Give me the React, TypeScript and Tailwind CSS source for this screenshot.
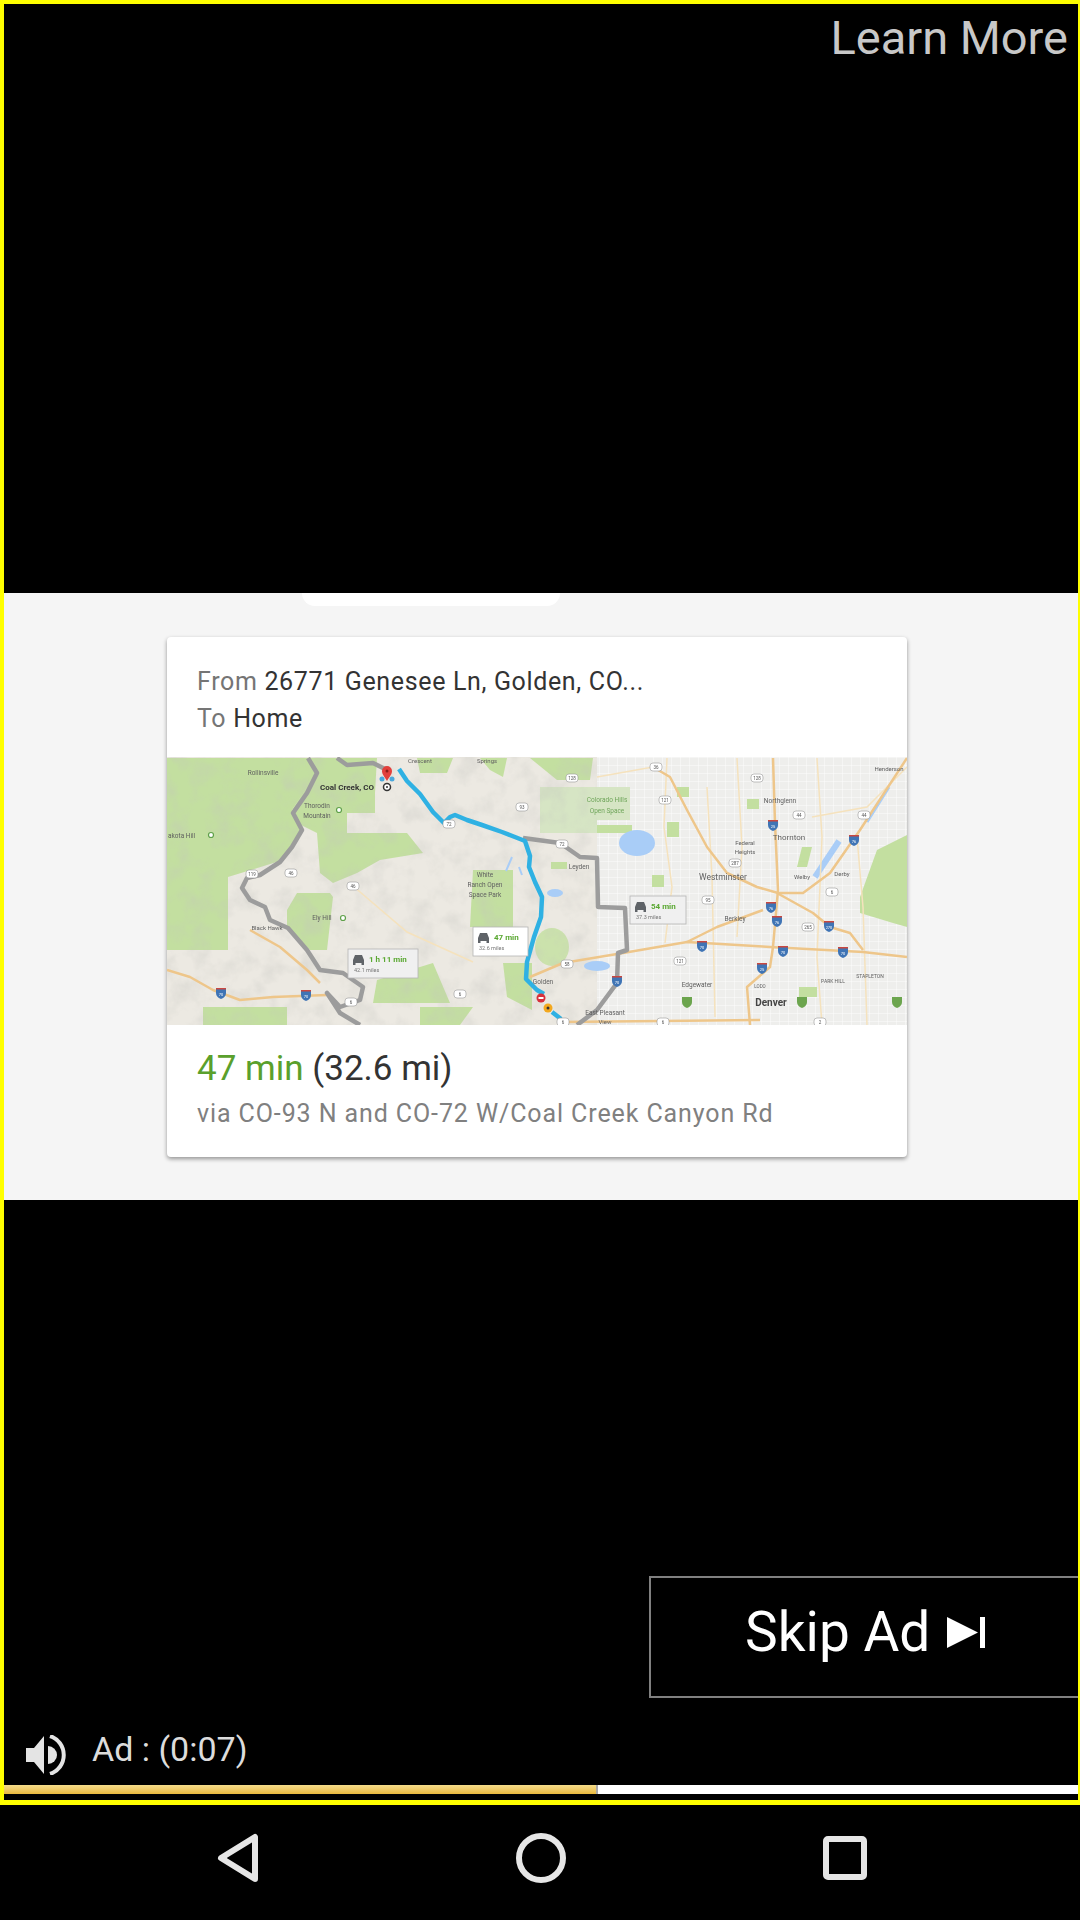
const greens = [
  "0,1 145,1 150,16 125,53 135,73 116,103 61,120 61,193 0,193",
  "145,1 210,1 208,36 208,56 180,56 180,76 150,76 130,66 125,53 140,30",
  "150,76 240,76 256,96 213,103 190,116 166,126 153,116",
  "120,153 130,136 163,136 166,140 160,193 143,193 120,170",
  "210,223 266,206 283,246 206,246",
  "36,250 120,250 120,268 36,268",
  "253,250 306,250 293,268 253,268",
  "306,113 346,113 346,170 303,170",
  "336,206 365,206 365,253 340,240",
  "250,1 286,1 280,16 253,16",
  "313,1 340,1 336,20 323,13",
  "363,1 426,1 423,23 390,23",
  "430,68 465,68 465,76 430,76",
  "740,78 710,93 693,140 693,156 726,166 740,170",
  "510,30 522,30 522,40 510,40",
  "580,42 592,42 592,52 580,52",
  "500,65 512,65 512,80 500,80",
  "485,118 497,118 497,130 485,130",
  "635,90 645,90 640,110 630,110",
  "632,230 650,230 650,240 632,240",
  "384,105 400,105 400,112 384,112",
];

const roads = [
  "606,1 608,66 611,133 606,190 603,210 580,230 583,268",
  "486,10 503,20 520,53 540,90 560,116 590,130 611,136 636,136 663,116 693,73 740,1",
  "610,136 646,156 663,170 683,176 696,193",
  "363,220 396,206 456,196 520,185 603,190 696,195 740,200",
  "520,185 550,170 596,153",
  "393,265 593,263",
  "0,213 23,220 46,233 73,243 106,240 160,238",
  "83,173 113,190 140,213 153,226",
];

const paleRoads = [
  "500,1 497,70 505,130 498,186",
  "540,30 545,120 548,260",
  "570,1 575,90 570,180",
  "650,1 655,80 650,200 655,268",
  "690,80 696,150 700,268",
  "430,20 486,10",
  "186,129 240,175 306,205",
  "645,60 700,50 740,10",
];

const grayRoutes = [
  "141,1 150,16 140,36 126,56 135,73 125,90 113,105 93,118 80,121 75,131 83,143 98,150 103,163 121,171 140,193 153,213 176,216 196,230 193,243 173,250 160,236 173,256 193,268",
  "170,1 180,8 206,6 220,13",
  "356,81 393,86 413,100 430,101 431,150 458,151 460,193 451,196 450,226 430,253 410,268",
];

const labels = [
  { x: 96, y: 18, t: "Rollinsville", s: 6.5 },
  { x: 150, y: 51, t: "Thorodin", s: 6.5 },
  { x: 150, y: 61, t: "Mountain", s: 6.5 },
  { x: 1, y: 81, t: "akota Hill", s: 6.5 },
  { x: 100, y: 173, t: "Black Hawk", s: 6 },
  { x: 155, y: 163, t: "Ely Hill", s: 6.5 },
  { x: 318, y: 120, t: "White", s: 6.5 },
  { x: 318, y: 130, t: "Ranch Open", s: 6.5 },
  { x: 318, y: 140, t: "Space Park", s: 6.5 },
  { x: 253, y: 6, t: "Crescent", s: 6 },
  { x: 320, y: 6, t: "Springs", s: 6 },
  { x: 412, y: 112, t: "Leyden", s: 6.5 },
  { x: 613, y: 46, t: "Northglenn", s: 6.5 },
  { x: 622, y: 83, t: "Thornton", s: 8 },
  { x: 578, y: 88, t: "Federal", s: 6 },
  { x: 578, y: 97, t: "Heights", s: 6 },
  { x: 556, y: 123, t: "Westminster", s: 8.5 },
  { x: 635, y: 122, t: "Welby", s: 6 },
  { x: 675, y: 119, t: "Derby", s: 6 },
  { x: 568, y: 164, t: "Berkley", s: 6.5 },
  { x: 530, y: 230, t: "Edgewater", s: 6.5 },
  { x: 376, y: 227, t: "Golden", s: 6.5 },
  { x: 438, y: 258, t: "East Pleasant", s: 6.5 },
  { x: 438, y: 267, t: "View", s: 6 },
  { x: 722, y: 14, t: "Henderson", s: 6 },
  { x: 666, y: 226, t: "PARK HILL", s: 5 },
  { x: 703, y: 221, t: "STAPLETON", s: 5 },
  { x: 593, y: 231, t: "LODO", s: 4.5 },
];

const interstates = [
  [606, 68, "25"], [687, 83, "76"], [604, 150, "76"], [610, 164, "76"], [662, 169, "270"],
  [535, 189, "70"], [616, 194, "70"], [676, 195, "70"], [595, 211, "25"], [450, 224, "70"],
  [54, 236, "70"], [139, 238, "70"],
] as const;

const greenShields = [
  [520, 245], [635, 245], [730, 245],
];

const parkDots = [
  [172, 53], [44, 78], [176, 161],
];

const shields = [
  [85, 117, "119"], [124, 116, "46"], [186, 129, "46"], [355, 50, "93"], [282, 67, "72"],
  [184, 245, "6"], [293, 237, "6"], [405, 21, "128"], [590, 21, "128"], [489, 10, "36"],
  [498, 43, "121"], [632, 58, "44"], [697, 58, "44"], [395, 87, "72"], [665, 135, "6"],
  [541, 143, "95"], [513, 204, "121"], [400, 207, "58"], [568, 106, "287"], [641, 170, "265"],
  [496, 265, "6"], [653, 265, "2"], [396, 265, "6"],
] as const;

function Callout({ x, y, w, h, time, miles, fill }: { x: number; y: number; w: number; h: number; time: string; miles: string; fill: string }) {
  return (
    <g>
      <rect x={x} y={y} width={w} height={h} fill={fill} stroke="#b5b5b5" strokeWidth="0.8" />
      <path
        d={`M${x + 5} ${y + 16}v-5l2-5h7l2 5v5h-2.5v-2h-6v2z`}
        fill="#5f6368"
      />
      <text x={x + 21} y={y + 13} fontSize="8" fontWeight="700" fill="#5aa832">{time}</text>
      <text x={x + 6} y={y + 23} fontSize="5.5" fill="#777777">{miles}</text>
    </g>
  );
}

function RouteMap() {
  return (
    <svg viewBox="0 0 740 268" className="block w-full h-[268px] blur-[0.7px]">
      <defs>
        <pattern id="streets" width="9" height="8" patternUnits="userSpaceOnUse">
          <path d="M0 0H9M0 0V8" stroke="#fbfbfb" strokeWidth="1" fill="none" />
        </pattern>
        <filter id="terrain" x="0" y="0" width="100%" height="100%">
          <feTurbulence type="fractalNoise" baseFrequency="0.045" numOctaves="4" seed="7" />
          <feColorMatrix values="0 0 0 0 0.55  0 0 0 0 0.55  0 0 0 0 0.52  0 0 0 2.2 -0.95" />
        </filter>
      </defs>
      <rect width="740" height="268" fill="#ece9e2" />
      <rect x="430" y="0" width="310" height="268" fill="#eeeeec" />
      <rect x="430" y="0" width="310" height="268" fill="url(#streets)" />
      <path d="M373 30H463V63H430V76H373z" fill="#d6e5c4" />
      {greens.map((points) => (
        <polygon key={points} points={points} fill="#c3dfa0" />
      ))}
      <ellipse cx="385" cy="190" rx="17" ry="19" fill="#cbe2ac" />
      <rect x="0" y="0" width="430" height="268" filter="url(#terrain)" opacity="0.35" />
      <ellipse cx="470" cy="86" rx="18" ry="13" fill="#a9cdf7" />
      <ellipse cx="430" cy="209" rx="13" ry="5" fill="#a9cdf7" />
      <ellipse cx="388" cy="136" rx="8" ry="4" fill="#a9cdf7" />
      <path d="M648 120L672 84" stroke="#a9cdf7" strokeWidth="6" fill="none" />
      <path d="M700 65L722 30" stroke="#a9cdf7" strokeWidth="3" fill="none" />
      <path d="M345 100l-6 14M352 110l3 8" stroke="#a9cdf7" strokeWidth="2" fill="none" />
      {paleRoads.map((points) => (
        <polyline key={points} points={points} fill="none" stroke="#f5e2bd" strokeWidth="1.5" />
      ))}
      {roads.map((points) => (
        <polyline key={points} points={points} fill="none" stroke="#eec68a" strokeWidth="2.5" strokeLinejoin="round" />
      ))}
      {grayRoutes.map((points) => (
        <polyline key={points} points={points} fill="none" stroke="#9c9c9c" strokeWidth="4.5" strokeLinejoin="round" />
      ))}
      <polyline
        points="232,12 240,24 253,37 266,55 277,66 283,60 288,58 300,63 315,68 335,75 353,82 358,84 363,99 362,110 368,125 375,140 374,160 367,180 360,205 359,222 370,233 377,237"
        fill="none"
        stroke="#2fb1e3"
        strokeWidth="4.5"
        strokeLinejoin="round"
      />
      <path d="M385 255L394 262" stroke="#2fb1e3" strokeWidth="4.5" />

      {labels.map((l) => (
        <text key={l.t} x={l.x} y={l.y} fontSize={l.s} fill="#5f5f5f" textAnchor={l.x > 20 ? "middle" : "start"}>
          {l.t}
        </text>
      ))}
      <text x="440" y="45" fontSize="6.5" fill="#6fa55a" textAnchor="middle">Colorado Hills</text>
      <text x="440" y="56" fontSize="6.5" fill="#6fa55a" textAnchor="middle">Open Space</text>
      <text x="180" y="33" fontSize="8" fontWeight="700" fill="#333333" textAnchor="middle">Coal Creek, CO</text>
      <text x="604" y="249" fontSize="10" fontWeight="700" fill="#444444" textAnchor="middle">Denver</text>

      {parkDots.map(([x, y]) => (
        <circle key={`${x}-${y}`} cx={x} cy={y} r="2.5" fill="#ffffff" stroke="#5fa04a" strokeWidth="1.2" />
      ))}
      {shields.map(([x, y, t]) => (
        <g key={`${x}-${y}`}>
          <rect x={x - 6} y={y - 4} width="12" height="8" rx="3" fill="#ffffff" stroke="#999999" strokeWidth="0.6" />
          <text x={x} y={y + 2} fontSize="4.5" fill="#555555" textAnchor="middle">{t}</text>
        </g>
      ))}
      {interstates.map(([x, y, t]) => (
        <g key={`${x}-${y}`}>
          <path d={`M${x - 5} ${y - 5}h10v5q0 4-5 6q-5-2-5-6z`} fill="#3f74b5" />
          <rect x={x - 5} y={y - 5} width="10" height="1.5" fill="#c9473f" />
          <text x={x} y={y + 2.5} fontSize="4" fill="#ffffff" textAnchor="middle">{t}</text>
        </g>
      ))}
      {greenShields.map(([x, y]) => (
        <path key={x} d={`M${x - 5} ${y - 5}h10v5q0 4-5 6q-5-2-5-6z`} fill="#6ca54e" />
      ))}

      <Callout x={181} y={192} w={70} h={29} time="1 h 11 min" miles="42.1 miles" fill="#f0f0f0" />
      <Callout x={306} y={170} w={55} h={29} time="47 min" miles="32.6 miles" fill="#ffffff" />
      <Callout x={463} y={139} w={56} h={28} time="54 min" miles="37.3 miles" fill="#f0f0f0" />

      <circle cx="215" cy="22" r="2.5" fill="#4aa8dc" />
      <circle cx="225" cy="22" r="2.5" fill="#4aa8dc" />
      <path d="M220 24c-3-5-5-7-5-10a5 5 0 0 1 10 0c0 3-2 5-5 10z" fill="#e2403c" />
      <circle cx="220" cy="14" r="1.5" fill="#8c1d18" />
      <circle cx="220" cy="30" r="3.5" fill="#ffffff" stroke="#333333" strokeWidth="1.5" />
      <circle cx="220" cy="30" r="1" fill="#333333" />
      <circle cx="374" cy="241" r="4.5" fill="#d8303c" />
      <rect x="371.5" y="240" width="5" height="2" fill="#ffffff" />
      <circle cx="381" cy="251" r="4.5" fill="#f3a81e" />
      <circle cx="381" cy="251" r="1.5" fill="#333333" />
    </svg>
  );
}

export default function App() {
  return (
    <div className="w-[1080px] h-[1920px] bg-black flex flex-col overflow-hidden [font-family:Roboto,sans-serif]">
      <div className="h-[1805px] shrink-0 border-t-4 border-l-4 border-r-2 border-b-[5px] border-[#ffff00] flex flex-col">
        <div className="h-[589px] shrink-0 flex justify-end items-start pr-[10px] pt-[6px]">
          <span className="text-[47px] leading-[56px] text-[#c8c8c8]">Learn More</span>
        </div>

        <div className="h-[607px] shrink-0 bg-[#f5f5f5]">
          <div className="ml-[298px] w-[258px] h-[13px] bg-white rounded-b-[14px]" />
          <div className="ml-[163px] mt-[31px] w-[740px] h-[520px] bg-white rounded-[4px] shadow-[0_2px_4px_rgba(0,0,0,0.4)] overflow-hidden">
            <div className="h-[120px] pl-[30px] pt-[26px] text-[25px] leading-[37px] tracking-[0.65px] text-[#757575]">
              <p>From <span className="text-[#333333]">26771 Genesee Ln, Golden, CO...</span></p>
              <p>To <span className="text-[#333333]">Home</span></p>
            </div>
            <RouteMap />
            <div className="pl-[30px] pt-[22px]">
              <p className="text-[35px] leading-[44px] text-[#333333]">
                <span className="text-[#5aa02c]">47 min</span> (32.6 mi)
              </p>
              <p className="mt-[5px] text-[25px] leading-[36px] tracking-[0.9px] text-[#808080]">
                via CO-93 N and CO-72 W/Coal Creek Canyon Rd
              </p>
            </div>
          </div>
        </div>

        <div className="flex-1 flex flex-col justify-end">
          <div className="self-end w-[429px] h-[122px] border-2 border-r-0 border-[#808080] flex items-center pl-[94px] pb-[10px] gap-[17px]">
            <span className="text-[55px] leading-[64px] text-white">Skip Ad</span>
            <svg viewBox="0 0 38 31" className="w-[38px] h-[31px]" fill="#ffffff">
              <path d="M0 0L31 15.5L0 31z" />
              <rect x="33" y="0" width="5" height="31" />
            </svg>
          </div>

          <div className="mt-[37px] h-[40px] flex items-center pl-[22px]">
            <svg viewBox="0 0 40 40" className="w-[40px] h-[40px]" fill="#e4e4e4">
              <path d="M0 13H8L18 1V39L8 27H0z" />
              <path d="M22 11A9 9 0 0 1 22 29z" />
              <path d="M24 1A20 20 0 0 1 24 39" fill="none" stroke="#e4e4e4" strokeWidth="4" />
            </svg>
            <span className="ml-[26px] -mt-[12px] text-[34px] leading-[40px] text-[#dcdcdc]">Ad : (0:07)</span>
          </div>

          <div className="mt-[10px] mb-[6px] h-[9px] flex bg-white">
            <div className="w-[594px] bg-gradient-to-b from-[#f4dc8a] to-[#e9b93c] border-r-2 border-[#a8a8a8]" />
          </div>
        </div>
      </div>

      <div className="flex-1 flex items-center justify-center gap-[257px] pb-[10px] pl-[3px]">
        <svg viewBox="0 0 42 50" className="w-[42px] h-[50px]" fill="none" stroke="#e6e6e6" strokeWidth="6" strokeLinejoin="round">
          <path d="M38 4V46L4 25z" />
        </svg>
        <svg viewBox="0 0 50 50" className="w-[50px] h-[50px]" fill="none" stroke="#e6e6e6" strokeWidth="6">
          <circle cx="25" cy="25" r="22" />
        </svg>
        <svg viewBox="0 0 44 44" className="w-[44px] h-[44px]" fill="none" stroke="#e6e6e6" strokeWidth="6" strokeLinejoin="round">
          <rect x="3" y="3" width="38" height="38" rx="2" />
        </svg>
      </div>
    </div>
  );
}
